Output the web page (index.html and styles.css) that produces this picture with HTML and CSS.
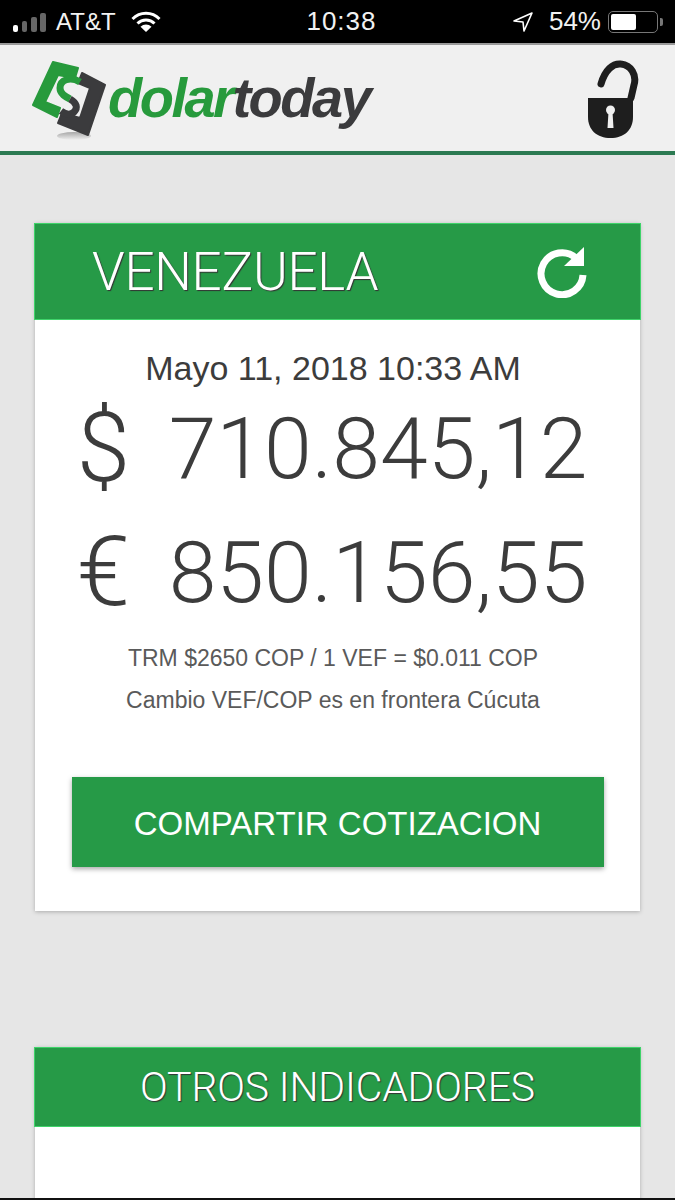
FILE: index.html
```html
<!DOCTYPE html>
<html lang="en">

<head>
    <meta charset="UTF-8">
    <title>DolarToday</title>
    <link rel="stylesheet" href="styles.css">
</head>

<body>
    <div class="status-bar">
        <div class="status-left">
            <svg class="signal" width="36" height="22" viewBox="0 0 36 22">
                <rect x="1" y="14" width="5" height="7" rx="2" fill="#fff"/>
                <rect x="10" y="10" width="5" height="11" rx="2" fill="#666"/>
                <rect x="19" y="6" width="6" height="15" rx="2" fill="#666"/>
                <rect x="28" y="2" width="6" height="19" rx="2" fill="#666"/>
            </svg>
            <span class="carrier">AT&amp;T</span>
            <svg class="wifi" width="30" height="22" viewBox="0 0 30 22">
                <path d="M1.5 8 A19 19 0 0 1 28.5 8" fill="none" stroke="#fff" stroke-width="3"/>
                <path d="M6.5 12.5 A12 12 0 0 1 23.5 12.5" fill="none" stroke="#fff" stroke-width="3"/>
                <path d="M15 21 L9.5 15.8 A8 8 0 0 1 20.5 15.8 Z" fill="#fff"/>
            </svg>
        </div>
        <span class="clock">10:38</span>
        <div class="status-right">
            <svg class="arrow" width="20" height="22" viewBox="0 0 20 22">
                <path d="M1 10 L19 2 L11 20 L10 11 Z" fill="none" stroke="#fff" stroke-width="1.6" stroke-linejoin="round"/>
            </svg>
            <span class="battery-text">54%</span>
            <div class="battery"><div class="battery-fill"></div></div>
            <div class="battery-tip"></div>
        </div>
    </div>

    <header class="top-bar">
        <div class="logo">
            <svg class="logo-mark" width="76" height="80" viewBox="0 0 76 80">
                <defs>
                    <linearGradient id="fade" x1="0" y1="0" x2="0" y2="1">
                        <stop offset="0" stop-color="#777" stop-opacity="0.6"/>
                        <stop offset="1" stop-color="#777" stop-opacity="0"/>
                    </linearGradient>
                </defs>
                <ellipse cx="44" cy="75" rx="17" ry="4" fill="url(#fade)"/>
                <path d="M23 1 L48 7 L45 17 L28 14 L15 41 L30 47 L27 56 L3 44 Z" fill="#279a3c" stroke="#279a3c" stroke-width="2" stroke-linejoin="round"/>
                <path d="M52 12 L75 24 L58 74 L28 62 L32 52 L50 57 L60 27 L48 22 Z" fill="#3b3b3d" stroke="#3b3b3d" stroke-width="2" stroke-linejoin="round"/>
                <path d="M50 21 C40 15 30 19 30 27 C30 33 36 36 40 38" fill="none" stroke="#279a3c" stroke-width="7"/>
                <path d="M40 38 C47 42 48 47 44 51 C40 55 35 53 31 50" fill="none" stroke="#3b3b3d" stroke-width="7"/>
            </svg>
            <span class="logo-text"><span class="logo-green">dolar</span><span class="logo-dark">today</span></span>
        </div>
        <svg class="lock" width="52" height="82" viewBox="0 0 52 82">
            <path d="M14 25 C18 11 26 4 34 5 C44 6 50 16 47 26 L44 39" fill="none" stroke="#1e1e1e" stroke-width="7" stroke-linecap="round"/>
            <path d="M1 39 L46 39 L46 58 C46 71 37 79 23.5 79 C10 79 1 71 1 58 Z" fill="#1e1e1e"/>
            <circle cx="23.5" cy="51" r="4.5" fill="#f0f0f0"/>
            <path d="M21.5 53 L25.5 53 L26.5 69 L20.5 69 Z" fill="#f0f0f0"/>
        </svg>
    </header>

    <main class="content">
        <section class="card card-main">
            <div class="card-head head-main">
                <h2 class="head-title">VENEZUELA</h2>
                <svg class="refresh" width="52" height="52" viewBox="0 0 52 52">
                    <path d="M40 12 A21 21 0 1 0 47 29" fill="none" stroke="#fff" stroke-width="7"/>
                    <path d="M48 1 L48 20 L28 20 Z" fill="#fff"/>
                </svg>
            </div>
            <div class="card-body">
                <p class="date">Mayo 11, 2018 10:33 AM</p>
                <p class="rate"><span class="symbol">$</span>710.845,12</p>
                <p class="rate rate-euro"><span class="symbol">€</span>850.156,55</p>
                <p class="note note-first">TRM $2650 COP / 1 VEF = $0.011 COP</p>
                <p class="note">Cambio VEF/COP es en frontera Cúcuta</p>
                <button class="share">COMPARTIR COTIZACION</button>
            </div>
        </section>

        <section class="card card-other">
            <div class="card-head head-other">
                <h2 class="head-title-small">OTROS INDICADORES</h2>
            </div>
            <div class="card-body-empty"></div>
        </section>
    </main>
</body>

</html>
```

FILE: styles.css
```css
html, body {
    height: 1200px;
    overflow: hidden;
}

body {
    margin: 0;
    background: #e6e6e6;
    font-family: "Liberation Sans", Arial, sans-serif;
    color: #3c3c3c;
    border-bottom: 2px solid #111;
    box-sizing: border-box;
}

.status-bar {
    height: 43px;
    background: #000;
    border-bottom: 2px solid #999;
    display: flex;
    align-items: center;
    justify-content: space-between;
    color: #f2f2f2;
    font-size: 24px;
    padding: 0 12px 0 12px;
}

.status-left, .status-right {
    display: flex;
    align-items: center;
}

.status-left {
    width: 200px;
}

.carrier {
    margin-left: 8px;
}

.wifi {
    margin-left: 15px;
}

.clock {
    font-size: 26px;
    letter-spacing: 1px;
    margin-left: -42px;
}

.battery-text {
    font-size: 26px;
    margin-left: 16px;
}

.battery {
    width: 50px;
    height: 22px;
    border: 1.5px solid #777;
    border-radius: 5px;
    margin-left: 7px;
    padding: 2px;
    box-sizing: border-box;
}

.battery-fill {
    width: 25px;
    height: 100%;
    background: #fff;
    border-radius: 2px;
}

.battery-tip {
    width: 3px;
    height: 8px;
    background: #777;
    margin-left: 2px;
    border-radius: 0 2px 2px 0;
}

.top-bar {
    height: 106px;
    background: #f0f0f0;
    border-bottom: 4px solid #2c7a52;
    display: flex;
    align-items: center;
    justify-content: space-between;
    padding: 0 36px 0 30px;
}

.logo {
    display: flex;
    align-items: center;
}

.logo-mark {
    margin-top: 6px;
}

.logo-text {
    font-size: 56px;
    font-weight: bold;
    font-style: italic;
    letter-spacing: -2.5px;
    margin-left: 2px;
    margin-top: -2px;
}

.logo-green {
    color: #279a3c;
}

.logo-dark {
    color: #3b3b3d;
}

.lock {
    margin-top: 4px;
}

.content {
    padding: 68px 34px 0 34px;
}

.card {
    background: #fff;
    margin: 0 1px;
    box-shadow: 0 1px 4px rgba(0, 0, 0, 0.25);
}

.card-main {
    height: 688px;
}

.card-other {
    margin-top: 136px;
}

.card-head {
    background: #269a47;
    border: 1px solid #3fd36a;
    margin: 0 -1px;
    display: flex;
    align-items: center;
    box-sizing: border-box;
    color: #fff;
}

.head-main {
    height: 97px;
    justify-content: space-between;
    padding: 0 52px 0 57px;
}

.head-other {
    height: 80px;
    justify-content: center;
}

.head-title, .head-title-small {
    margin: 0;
    font-family: Roboto, "Liberation Sans", sans-serif;
    font-weight: 300;
    text-shadow: 1px 1px 1px #333;
}

.head-title {
    font-size: 53px;
    letter-spacing: -0.3px;
}

.head-title-small {
    font-size: 41px;
    letter-spacing: -0.2px;
}

.card-body {
    display: flex;
    flex-direction: column;
    align-items: center;
}

.card-body p {
    margin: 0;
}

.date {
    font-size: 34px;
    line-height: 38px;
    margin-top: 29px !important;
    padding-right: 9px;
}

.rate {
    font-family: Roboto, "Liberation Sans", sans-serif;
    font-weight: 300;
    font-size: 86px;
    line-height: 100px;
    margin-top: 12px !important;
    padding-right: 9px;
}

.rate-euro {
    margin-top: 24px !important;
}

.symbol {
    display: inline-block;
    font-size: 96px;
    line-height: 0;
    width: 48px;
    margin-left: -2px;
    margin-right: 44px;
    vertical-align: -3px;
}

.note {
    font-size: 23px;
    line-height: 30px;
    color: #5a5a5a;
    margin-top: 12px !important;
    padding-right: 9px;
}

.note-first {
    margin-top: 20px !important;
}

.share {
    width: 532px;
    height: 90px;
    margin-top: 62px;
    padding-top: 4px;
    border: none;
    background: #269a47;
    color: #fff;
    font-family: "Liberation Sans", Arial, sans-serif;
    font-size: 33px;
    box-shadow: 0 2px 5px rgba(0, 0, 0, 0.35);
}

.card-body-empty {
    height: 80px;
}
```
